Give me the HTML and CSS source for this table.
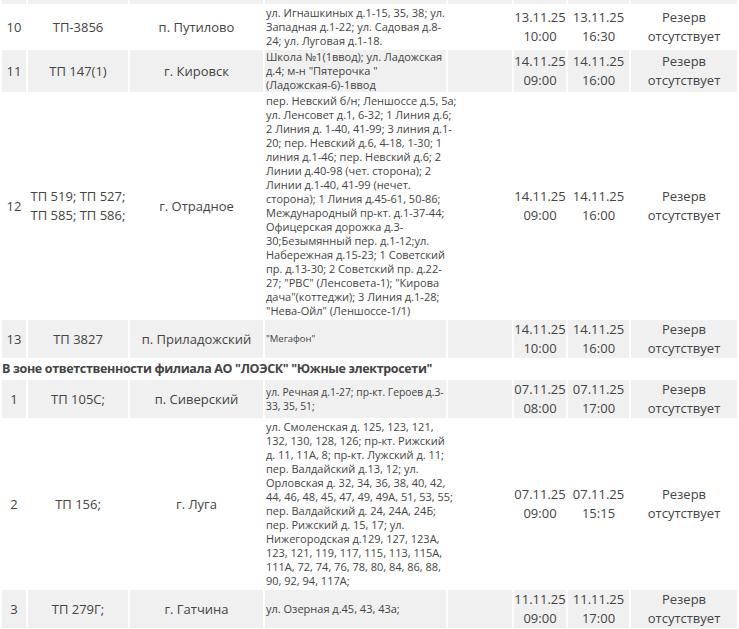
FILE: index.html
```html
<!DOCTYPE html>
<html lang="ru">
<head>
<meta charset="utf-8">
<title>Отключения</title>
<link rel="stylesheet" href="styles.css">
</head>
<body>
<table class="schedule">
  <colgroup>
    <col class="c-num">
    <col class="c-tp">
    <col class="c-place">
    <col class="c-addr">
    <col class="c-empty">
    <col class="c-from">
    <col class="c-to">
    <col class="c-reserve">
  </colgroup>
  <tbody>
    <tr class="row-alt row-cut"><td></td><td></td><td></td><td></td><td></td><td></td><td></td><td></td></tr>
    <tr>
      <td>10</td><td>ТП-3856</td><td>п. Путилово</td>
      <td class="addr">ул. Игнашкиных д.1-15, 35, 38; ул.<br>Западная д.1-22; ул. Садовая д.8-<br>24; ул. Луговая д.1-18.</td>
      <td></td><td>13.11.25 10:00</td><td>13.11.25 16:30</td><td>Резерв отсутствует</td>
    </tr>
    <tr class="row-alt">
      <td>11</td><td>ТП 147(1)</td><td>г. Кировск</td>
      <td class="addr">Школа №1(1ввод); ул. Ладожская<br>д.4; м-н "Пятерочка "<br>(Ладожская-6)-1ввод</td>
      <td></td><td>14.11.25 09:00</td><td>14.11.25 16:00</td><td>Резерв отсутствует</td>
    </tr>
    <tr>
      <td>12</td><td>ТП 519; ТП 527; ТП 585; ТП 586;</td><td>г. Отрадное</td>
      <td class="addr">пер. Невский б/н; Леншоссе д.5, 5а;<br>ул. Ленсовет д.1, 6-32; 1 Линия д.6;<br>2 Линия д. 1-40, 41-99; 3 линия д.1-<br>20; пер. Невский д.6, 4-18, 1-30; 1<br>линия д.1-46; пер. Невский д.6; 2<br>Линии д.40-98 (чет. сторона); 2<br>Линии д.1-40, 41-99 (нечет.<br>сторона); 1 Линия д.45-61, 50-86;<br>Международный пр-кт. д.1-37-44;<br>Офицерская дорожка д.3-<br>30;Безымянный пер. д.1-12;ул.<br>Набережная д.15-23; 1 Советский<br>пр. д.13-30; 2 Советский пр. д.22-<br>27; "РВС" (Ленсовета-1); "Кирова<br>дача"(коттеджи); 3 Линия д.1-28;<br>"Нева-Ойл" (Леншоссе-1/1)</td>
      <td></td><td>14.11.25 09:00</td><td>14.11.25 16:00</td><td>Резерв отсутствует</td>
    </tr>
    <tr class="row-alt">
      <td>13</td><td>ТП 3827</td><td>п. Приладожский</td>
      <td class="addr addr-xs">"Мегафон"</td>
      <td></td><td>14.11.25 10:00</td><td>14.11.25 16:00</td><td>Резерв отсутствует</td>
    </tr>
    <tr class="section">
      <td colspan="8">В зоне ответственности филиала АО "ЛОЭСК" "Южные электросети"</td>
    </tr>
    <tr class="row-alt">
      <td>1</td><td>ТП 105С;</td><td>п. Сиверский</td>
      <td class="addr addr-sm">ул. Речная д.1-27; пр-кт. Героев д.3-<br>33, 35, 51;</td>
      <td></td><td>07.11.25 08:00</td><td>07.11.25 17:00</td><td>Резерв отсутствует</td>
    </tr>
    <tr>
      <td>2</td><td>ТП 156;</td><td>г. Луга</td>
      <td class="addr">ул. Смоленская д. 125, 123, 121,<br>132, 130, 128, 126; пр-кт. Рижский<br>д. 11, 11А, 8; пр-кт. Лужский д. 11;<br>пер. Валдайский д.13, 12; ул.<br>Орловская д. 32, 34, 36, 38, 40, 42,<br>44, 46, 48, 45, 47, 49, 49А, 51, 53, 55;<br>пер. Валдайский д. 24, 24А, 24Б;<br>пер. Рижский д. 15, 17; ул.<br>Нижегородская д.129, 127, 123А,<br>123, 121, 119, 117, 115, 113, 115А,<br>111А, 72, 74, 76, 78, 80, 84, 86, 88,<br>90, 92, 94, 117А;</td>
      <td></td><td>07.11.25 09:00</td><td>07.11.25 15:15</td><td>Резерв отсутствует</td>
    </tr>
    <tr class="row-alt">
      <td>3</td><td>ТП 279Г;</td><td>г. Гатчина</td>
      <td class="addr">ул. Озерная д.45, 43, 43а;</td>
      <td></td><td>11.11.25 09:00</td><td>11.11.25 17:00</td><td>Резерв отсутствует</td>
    </tr>
  </tbody>
</table>
</body>
</html>
```

FILE: styles.css
```css
html, body {
  margin: 0;
  padding: 0;
  background: #ffffff;
}

body {
  font-family: "Open Sans", "Noto Sans", sans-serif;
  color: #444444;
  overflow: hidden;
}

.schedule {
  table-layout: fixed;
  width: 739px;
  border-collapse: separate;
  border-spacing: 2px;
  margin-top: -2px;
  font-size: 13px;
  line-height: 19px;
}

.c-num { width: 24px; }
.c-tp { width: 100px; }
.c-place { width: 133px; }
.c-addr { width: 181px; }
.c-empty { width: 64px; }
.c-from { width: 52px; }
.c-to { width: 61px; }
.c-reserve { width: 106px; }

.schedule td {
  padding: 0;
  text-align: center;
  vertical-align: middle;
  background: #ffffff;
}

.schedule .row-alt td {
  background: #f0f0f0;
}

.schedule .row-cut td {
  height: 4px;
  line-height: 4px;
}

.schedule td.addr {
  text-align: left;
  font-size: 11px;
  line-height: 14px;
  padding: 0 0 0 1px;
  white-space: nowrap;
}

.schedule td.addr-sm {
  font-size: 10.3px;
}

.schedule td.addr-xs {
  font-size: 9.5px;
}

.schedule .section td {
  text-align: left;
  font-weight: 700;
  font-size: 12.5px;
  letter-spacing: -0.35px;
  line-height: 18px;
  padding: 0;
}
```
